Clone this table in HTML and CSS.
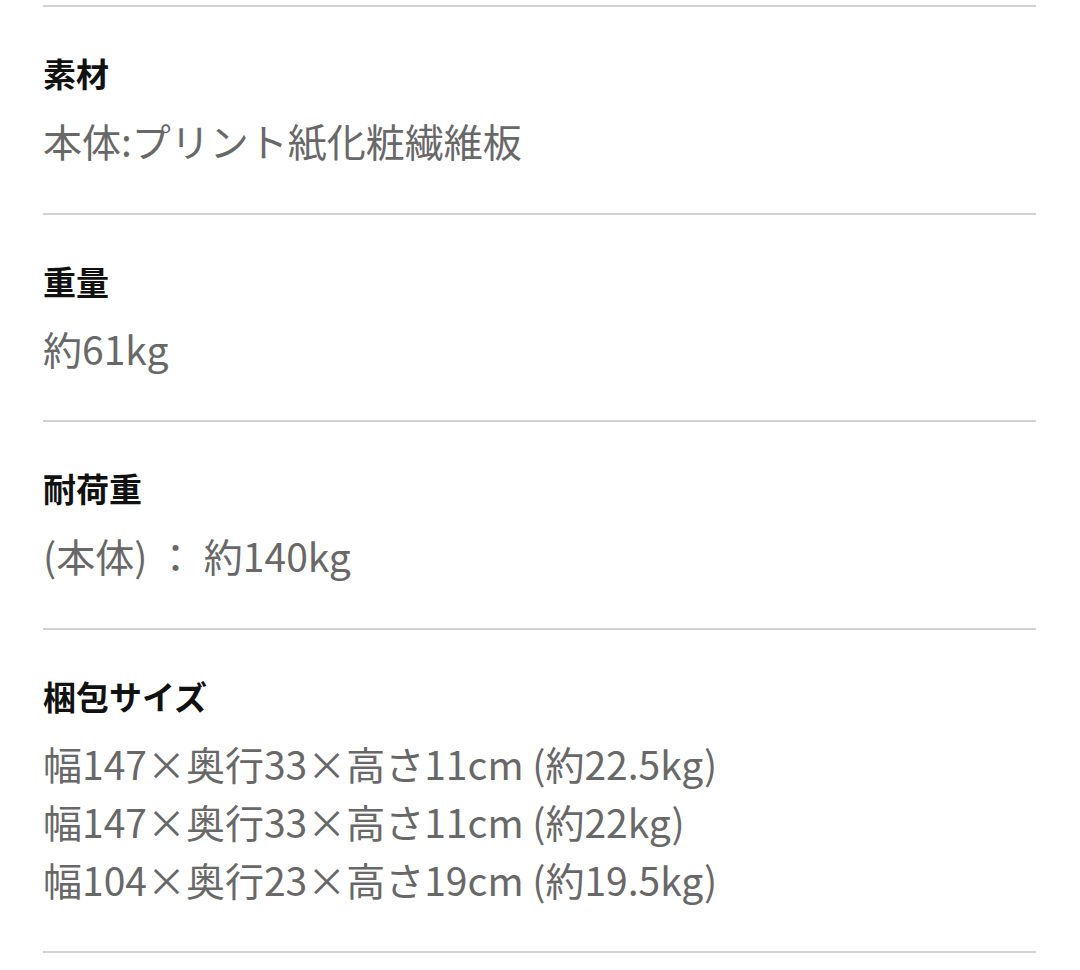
FILE: index.html
```html
<!DOCTYPE html>
<html lang="ja">
<head>
<meta charset="utf-8">
<title>商品詳細</title>
<link rel="stylesheet" href="styles.css">
</head>
<body>
<div class="specs">
  <section class="spec">
    <h3 class="spec-title">素材</h3>
    <div class="spec-value">本体:プリント紙化粧繊維板</div>
  </section>
  <section class="spec">
    <h3 class="spec-title">重量</h3>
    <div class="spec-value">約61kg</div>
  </section>
  <section class="spec">
    <h3 class="spec-title">耐荷重</h3>
    <div class="spec-value">(本体) ： 約140kg</div>
  </section>
  <section class="spec">
    <h3 class="spec-title">梱包サイズ</h3>
    <div class="spec-value">幅147×奥行33×高さ11cm (約22.5kg)</div>
    <div class="spec-value-cont">幅147×奥行33×高さ11cm (約22kg)</div>
    <div class="spec-value-cont">幅104×奥行23×高さ19cm (約19.5kg)</div>
  </section>
</div>
</body>
</html>
```
FILE: styles.css
```css
html, body {
  margin: 0;
  padding: 0;
  background: #ffffff;
}
body {
  font-family: "Noto Sans CJK JP", "Noto Sans", sans-serif;
}
.specs {
  padding: 5px 44px 0 43px;
}
.spec {
  border-top: 2px solid #d2d2d2;
  padding: 46px 0 43.5px;
}
.specs .spec:last-child {
  border-bottom: 2px solid #d2d2d2;
}
.spec-title {
  margin: 0;
  font-size: 33px;
  line-height: 40px;
  font-weight: 700;
  color: #111111;
}
.spec-value {
  margin-top: 18px;
  font-size: 39px;
  line-height: 58px;
  color: #686868;
}
.spec-value-cont {
  font-size: 39px;
  line-height: 58px;
  color: #686868;
}
```
